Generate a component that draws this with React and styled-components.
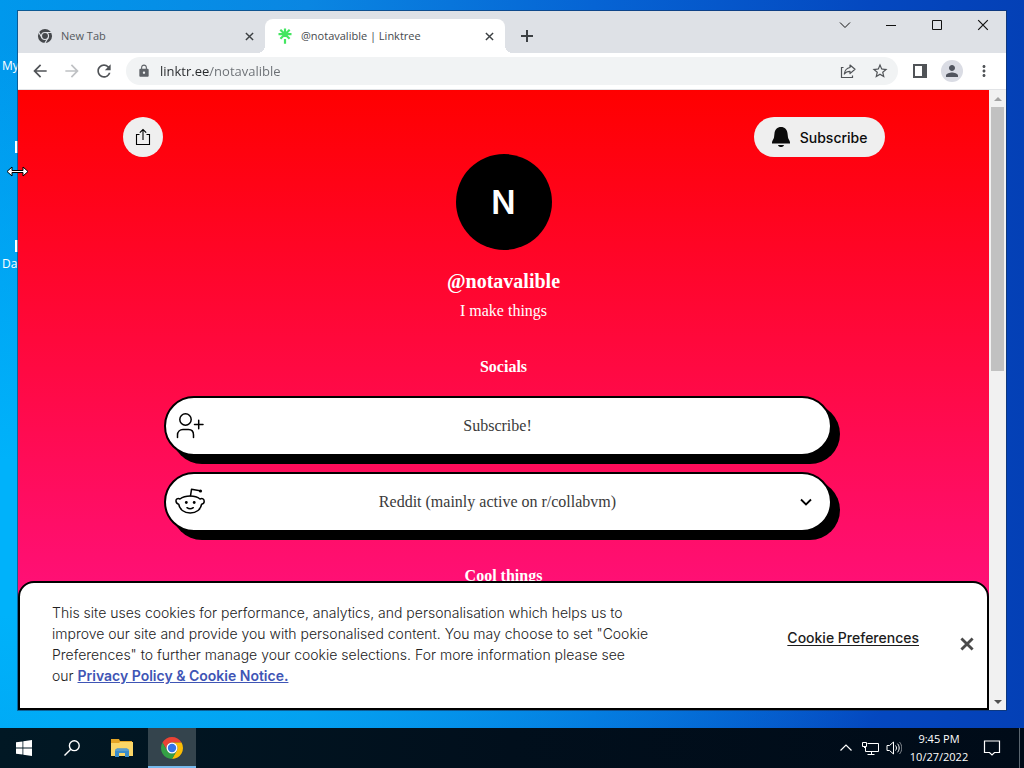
import React from "react";
import styled, { createGlobalStyle } from "styled-components";
import {
  MdArrowBack,
  MdArrowForward,
  MdRefresh,
  MdLock,
  MdStarBorder,
  MdMoreVert,
  MdPerson,
} from "react-icons/md";

const UI_FONT = '"Open Sans", "Noto Sans", sans-serif';
const PAGE_FONT = 'Inter, "Liberation Sans", sans-serif';
const SERIF_FONT = '"Liberation Serif", serif';

const GlobalStyle = createGlobalStyle`
  *, *::before, *::after { box-sizing: border-box; }
  body { margin: 0; font-family: ${UI_FONT}; }
  button {
    border: 0;
    padding: 0;
    margin: 0;
    background: none;
    color: inherit;
    font: inherit;
    cursor: pointer;
  }
  svg { display: block; flex: none; }
`;

/* ---------- Desktop ---------- */

const Desktop = styled.div`
  position: relative;
  display: flex;
  flex-direction: column;
  height: 100vh;
  overflow: hidden;
  background:
    radial-gradient(ellipse at 0% 70%, rgba(0, 178, 250, 1) 10%, rgba(0, 178, 250, 0) 65%),
    linear-gradient(90deg, #0098ec 0%, #0a86e2 30%, #0664d4 58%, #0448c0 85%, #0440b6 100%);
`;

const Shortcut = styled.span`
  position: absolute;
  left: 2px;
  top: ${(p) => p.$top}px;
  color: #fff;
  font-size: 12px;
  line-height: 16px;
`;

const ShortcutArt = styled.span`
  position: absolute;
  left: 15px;
  top: ${(p) => p.$top}px;
  width: 24px;
  height: 12px;
  background: #fff;
`;

const ResizeCursor = styled.svg`
  position: absolute;
  left: 6px;
  top: 165px;
`;

/* ---------- Browser window ---------- */

const Window = styled.main`
  position: relative;
  flex: 1;
  min-height: 0;
  margin: 11px 18px 18px;
  display: flex;
  flex-direction: column;
  background: #fff;
  box-shadow: 0 0 0 1px rgba(20, 50, 90, 0.6);
`;

const TitleBar = styled.header`
  display: flex;
  flex: none;
  height: 42px;
  padding-left: 7px;
  background: #dee1e6;
`;

const Tab = styled.div`
  position: relative;
  display: flex;
  align-items: center;
  align-self: flex-end;
  gap: 8px;
  width: 240px;
  height: 34px;
  padding: 0 8px 0 12px;
  border-radius: 8px 8px 0 0;
  background: ${(p) => (p.$active ? "#fff" : "transparent")};
  color: ${(p) => (p.$active ? "#45494d" : "#54585d")};
  font-size: 11px;
  line-height: 16px;

  &::before,
  &::after {
    content: ${(p) => (p.$active ? '""' : "none")};
    position: absolute;
    bottom: 0;
    width: 8px;
    height: 8px;
  }
  &::before {
    right: 100%;
    background: radial-gradient(circle at 0 0, transparent 8px, #fff 8px);
  }
  &::after {
    left: 100%;
    background: radial-gradient(circle at 100% 0, transparent 8px, #fff 8px);
  }
`;

const TabTitle = styled.span`
  flex: 1;
  white-space: nowrap;
`;

const TabButton = styled.button`
  display: grid;
  place-items: center;
  width: 16px;
  height: 16px;
  color: #3c4043;
`;

const NewTabButton = styled(TabButton)`
  align-self: flex-end;
  width: 28px;
  height: 34px;
  margin-left: 8px;
`;

const WindowControls = styled.div`
  display: flex;
  margin-left: auto;
`;

const WindowButton = styled.button`
  display: grid;
  place-items: center;
  width: 46px;
  height: 28px;
  color: #111;
`;

const Toolbar = styled.nav`
  display: flex;
  flex: none;
  align-items: center;
  height: 37px;
  padding: 0 6px;
  border-bottom: 1px solid #e2e4e7;
  background: #fff;
`;

const ToolButton = styled.button`
  display: grid;
  place-items: center;
  width: 32px;
  height: 28px;
  color: ${(p) => (p.$faded ? "#bfc1c4" : "#505357")};
`;

const AddressBar = styled.label`
  display: flex;
  flex: 1;
  align-items: center;
  height: 28px;
  margin: 0 6px;
  padding: 0 2px 0 11px;
  border-radius: 14px;
  background: #f1f3f4;
  color: #5f6368;
`;

const AddressInput = styled.input`
  flex: 1;
  min-width: 0;
  margin-left: 9px;
  padding: 0;
  border: 0;
  outline: 0;
  background: linear-gradient(90deg, #26282b 50px, #6a6e73 50px);
  background-clip: text;
  -webkit-text-fill-color: transparent;
  color: #5f6368;
  font-family: ${UI_FONT};
  font-size: 13px;
  line-height: 20px;
`;

const ProfileBadge = styled.span`
  display: grid;
  place-items: center;
  width: 22px;
  height: 22px;
  border-radius: 50%;
  background: #dadce4;
  color: #50545e;
`;

/* ---------- Page view ---------- */

const View = styled.div`
  display: flex;
  flex: 1;
  min-height: 0;
`;

const Page = styled.div`
  position: relative;
  flex: 1;
  overflow: hidden;
  background: linear-gradient(180deg, #ff0000 0%, #ff1493 100%);
  color: #fff;
  font-family: ${SERIF_FONT};
`;

const ScrollBar = styled.div`
  display: flex;
  flex-direction: column;
  align-items: center;
  width: 17px;
  background: #f1f1f1;
`;

const ScrollArrow = styled.button`
  display: grid;
  place-items: center;
  width: 17px;
  height: 17px;
  color: ${(p) => (p.$dim ? "#a3a3a3" : "#505050")};
`;

const ScrollTrack = styled.div`
  flex: 1;
  width: 13px;
`;

const ScrollThumb = styled.div`
  height: 45%;
  background: #c1c1c1;
`;

const ProfileHeader = styled.header`
  display: grid;
  grid-template-columns: 1fr auto 1fr;
  align-items: start;
  max-width: 762px;
  margin: 0 auto;
  padding-top: 27px;
`;

const ShareButton = styled.button`
  display: grid;
  place-items: center;
  width: 40px;
  height: 40px;
  border-radius: 50%;
  background: #efefef;
  color: #000;
`;

const SubscribeButton = styled.button`
  display: flex;
  align-items: center;
  justify-self: end;
  gap: 9px;
  height: 40px;
  padding: 0 17px;
  border-radius: 20px;
  background: #efefef;
  color: #0c0c0c;
  font-family: ${PAGE_FONT};
  font-size: 14px;
  font-weight: 500;
`;

const Avatar = styled.div`
  display: grid;
  place-items: center;
  width: 96px;
  height: 96px;
  margin-top: 37px;
  border-radius: 50%;
  background: #000;
  color: #fff;
  font-family: ${PAGE_FONT};
  font-size: 32px;
  font-weight: 600;
`;

const Handle = styled.h1`
  margin: 19px 0 0;
  font-size: 20px;
  line-height: 24px;
  text-align: center;
`;

const Bio = styled.p`
  margin: 8px 0 0;
  font-size: 16px;
  line-height: 20px;
  text-align: center;
`;

const SectionTitle = styled.h2`
  margin: 34px 0 20px;
  font-size: 16px;
  line-height: 20px;
  text-align: center;

  ${Bio} + & { margin: 36px 0 19px; }
`;

const Links = styled.div`
  display: flex;
  flex-direction: column;
  gap: 16px;
  max-width: 680px;
  margin: 0 auto;
  padding-right: 12px;
`;

const LinkCard = styled.a`
  display: grid;
  grid-template-columns: 32px 1fr 32px;
  align-items: center;
  justify-items: center;
  height: 60px;
  padding: 0 8px;
  border: 2px solid #000;
  border-radius: 30px;
  background: #fff;
  box-shadow: 8px 8px 0 #000;
  color: #3a3a3a;
  font-size: 16px;
  line-height: 20px;
  text-decoration: none;

  svg { color: #000; }
`;

/* ---------- Cookie banner ---------- */

const CookieBanner = styled.section`
  position: absolute;
  left: 0;
  right: 0;
  bottom: 0;
  display: flex;
  align-items: center;
  padding: 19px 12px 22px 32px;
  border: 2px solid #000;
  border-radius: 16px 16px 0 0;
  background: #fff;
  color: #222;
  font-family: ${PAGE_FONT};
  font-size: 14px;
`;

const CookieText = styled.p`
  max-width: 598px;
  margin: 0 auto 0 0;
  font-weight: 300;
  line-height: 21px;
`;

const PolicyLink = styled.a`
  color: #3f55b5;
  font-weight: 600;
`;

const PreferencesButton = styled.button`
  margin-right: 39px;
  padding-bottom: 14px;
  color: #1c1c1c;
  font-weight: 500;
  text-decoration: underline;
  text-underline-offset: 2px;
`;

const CloseButton = styled.button`
  display: grid;
  place-items: center;
  width: 17px;
  height: 20px;
  color: #4a4a4a;
`;

/* ---------- Taskbar ---------- */

const Taskbar = styled.footer`
  display: flex;
  flex: none;
  height: 40px;
  background: linear-gradient(90deg, #011824 0%, #010f1c 50%, #000b18 100%);
  color: #fff;
`;

const TaskGroup = styled.div`
  display: flex;
  gap: ${(p) => p.$gap || 0}px;
`;

const TaskButton = styled.button`
  display: grid;
  place-items: center;
  width: 48px;
  height: 40px;
  border-bottom: 2px solid ${(p) => (p.$active ? "#76b9ed" : "transparent")};
  border-top: 2px solid transparent;
  background: ${(p) => (p.$active ? "#34444d" : "none")};
`;

const Tray = styled.div`
  display: flex;
  align-items: center;
  margin-left: auto;
  padding-right: 7px;
`;

const TrayButton = styled.button`
  display: grid;
  place-items: center;
  width: ${(p) => p.$width || 24}px;
  height: 40px;
`;

const Clock = styled.time`
  width: 66px;
  font-size: 11px;
  line-height: 18px;
  text-align: center;
  white-space: nowrap;
`;

const ShowDesktop = styled.button`
  width: 5px;
  height: 40px;
  border-left: 1px solid #5b6670;
`;

/* ---------- Icons ---------- */

const Stroke = ({ size = 16, box = size, width = 1, children, ...rest }) => (
  <svg
    width={size}
    height={size}
    viewBox={`0 0 ${box} ${box}`}
    fill="none"
    stroke="currentColor"
    strokeWidth={width}
    aria-hidden="true"
    {...rest}
  >
    {children}
  </svg>
);

const ChromeLogo = ({ size }) => (
  <svg width={size} height={size} viewBox="2 2 44 44" aria-hidden="true">
    <path fill="#ea4335" d="M4.95 13A22 22 0 0 1 43.05 13H24A11 11 0 0 0 14.47 29.5Z" />
    <path fill="#fbbc05" d="M43.05 13A22 22 0 0 1 24 46L33.53 29.5A11 11 0 0 0 24 13Z" />
    <path fill="#34a045" d="M24 46A22 22 0 0 1 4.95 13L14.47 29.5A11 11 0 0 0 33.53 29.5Z" />
    <circle cx="24" cy="24" r="11" fill="#fff" />
    <circle cx="24" cy="24" r="8.4" fill="#3474e8" />
  </svg>
);

const GreyChrome = () => (
  <svg width="16" height="16" viewBox="-1 -1 50 50" aria-hidden="true">
    <circle cx="24" cy="24" r="22" fill="#45484c" />
    <g stroke="#dee1e6" strokeWidth="3.6" fill="none">
      <circle cx="24" cy="24" r="11" />
      <path d="M24 13H46M33.5 29.5L22.500 48.500M14.500 29.500L3.500 10.500" />
    </g>
  </svg>
);

const LinktreeMark = () => (
  <Stroke size={16} width={2.2} style={{ color: "#43e660" }}>
    <path d="M8 .5V9M1.500 6.200H14.500M3.300 1.700L12.600 10.700M12.700 1.700L3.400 10.700M8 11V15.700" />
  </Stroke>
);

const Cross = ({ size = 9, width = 1.6 }) => (
  <Stroke size={size} box={10} width={width}>
    <path d="M1 1L9 9M9 1L1 9" />
  </Stroke>
);

const PageShare = () => (
  <Stroke size={16} width={1.2}>
    <path d="M3.500 4.500H1.500V14.500H12.500V12.500" />
    <path
      d="M10 2L15 6.300L10 10.600V8.300C7.300 8.300 5.600 9.200 4.300 11C4.800 7.500 6.700 5 10 4.500Z"
      strokeLinejoin="round"
    />
  </Stroke>
);

const SidePanel = () => (
  <svg width="14" height="14" viewBox="0 0 14 14" aria-hidden="true">
    <path fill="currentColor" fillRule="evenodd" d="M0 0H14V14H0ZM2 2V12H9V2Z" />
  </svg>
);

const ShareTray = () => (
  <Stroke size={18} width={1.1}>
    <path d="M5.500 6.500H2.500V16.500H15.500V6.500H12.500M9 12V1.500M5.800 4.700L9 1.500L12.200 4.700" />
  </Stroke>
);

const Bell = () => (
  <svg width="20" height="22" viewBox="0 0 20 22" fill="currentColor" aria-hidden="true">
    <path d="M10 1C6.300 1 3.800 3.700 3.500 7.200L3 11.500C2.700 13.300 1 14.600 1 16.500V17.500H19V16.500C19 14.600 17.300 13.300 17 11.500L16.500 7.200C16.200 3.700 13.700 1 10 1Z" />
    <path d="M7 19H13C12.600 20.400 11.400 21 10 21C8.600 21 7.400 20.400 7 19Z" />
  </svg>
);

const PersonAdd = () => (
  <Stroke size={28} width={1.5} strokeLinecap="round">
    <circle cx="9.500" cy="7.500" r="5.700" />
    <path d="M1.500 25.500V23C1.500 19.500 4 17.500 7 17.500H12.500C15.500 17.500 17.500 19.500 17.500 23V25.500M18.500 12.500H27M22.700 8.300V16.700" />
  </Stroke>
);

const RedditFace = () => (
  <Stroke size={30} width={1.5} strokeLinejoin="round">
    <path d="M5 12C2.500 10.800 .8 12.300 1 14.200C1.200 16 2.300 17 3.700 17.200C4.300 22.200 9 26 15.200 26C21.500 26 26 22.200 26.600 17.200C28.100 16.900 29.200 15.900 29.200 14.200C29.200 11.900 27.300 10.800 25 12C22.600 10 19 9 15.200 9C11.300 9 7.600 10 5 12Z" />
    <path d="M15.500 8.800L16.500 2.300L25 3.800M12 20.700C13.800 22 16.500 22 18.300 20.700" strokeLinecap="round" />
    <circle cx="25.500" cy="4" r="1.600" fill="currentColor" stroke="none" />
    <circle cx="11.300" cy="15.500" r="1.400" fill="currentColor" stroke="none" />
    <circle cx="19.200" cy="15.500" r="1.400" fill="currentColor" stroke="none" />
  </Stroke>
);

const WindowsLogo = () => (
  <svg width="16" height="16" viewBox="0 0 16 16" fill="#fff" aria-hidden="true">
    <path d="M0 2.300L6.500 1.400V7.500H0ZM7.300 1.300L16 0V7.500H7.300ZM0 8.400H6.500V14.600L0 13.700ZM7.300 8.400H16V16L7.300 14.700Z" />
  </svg>
);

const FolderIcon = () => (
  <svg width="22" height="20" viewBox="0 0 22 20" aria-hidden="true">
    <path fill="#e5a526" d="M0 1H8L9 3H21V18H0Z" />
    <path fill="#fbd667" d="M0 5H8L9 4H22V18H0Z" />
    <path fill="#3a8ccb" d="M4 12L6 10.500H16L18 12V19H14V15H8V19H4Z" />
    <path fill="#5a9ccc" d="M6 10.500H16L18 12V13H4V12Z" />
  </svg>
);

/* ---------- App ---------- */

export default function App() {
  return (
    <Desktop>
      <GlobalStyle />
      <Shortcut $top={58}>My</Shortcut>
      <ShortcutArt $top={141} />
      <ShortcutArt $top={240} />
      <Shortcut $top={256}>Da</Shortcut>

      <Window>
        <TitleBar>
          <Tab>
            <GreyChrome />
            <TabTitle>New Tab</TabTitle>
            <TabButton aria-label="Close New Tab"><Cross /></TabButton>
          </Tab>
          <Tab $active>
            <LinktreeMark />
            <TabTitle>@notavalible | Linktree</TabTitle>
            <TabButton aria-label="Close Linktree"><Cross /></TabButton>
          </Tab>
          <NewTabButton aria-label="New tab">
            <Stroke size={12} width={2}><path d="M6 0V12M0 6H12" /></Stroke>
          </NewTabButton>
          <WindowControls>
            <WindowButton aria-label="Search tabs">
              <Stroke size={12}><path d="M1 3.500L6 8.500L11 3.500" /></Stroke>
            </WindowButton>
            <WindowButton aria-label="Minimize">
              <Stroke size={10}><path d="M0 5.500H10" /></Stroke>
            </WindowButton>
            <WindowButton aria-label="Maximize">
              <Stroke size={10}><path d="M.5 .5H9.500V9.500H.5Z" /></Stroke>
            </WindowButton>
            <WindowButton aria-label="Close window"><Cross size={12} width={1} /></WindowButton>
          </WindowControls>
        </TitleBar>

        <Toolbar>
          <ToolButton aria-label="Back"><MdArrowBack size={20} /></ToolButton>
          <ToolButton aria-label="Forward" $faded><MdArrowForward size={20} /></ToolButton>
          <ToolButton aria-label="Reload"><MdRefresh size={20} /></ToolButton>
          <AddressBar>
            <MdLock size={14} />
            <AddressInput aria-label="Address" type="text" defaultValue="linktr.ee/notavalible" />
            <ToolButton aria-label="Share this page"><PageShare /></ToolButton>
            <ToolButton aria-label="Bookmark this page"><MdStarBorder size={18} /></ToolButton>
          </AddressBar>
          <ToolButton aria-label="Side panel"><SidePanel /></ToolButton>
          <ToolButton aria-label="Profile">
            <ProfileBadge><MdPerson size={18} /></ProfileBadge>
          </ToolButton>
          <ToolButton aria-label="Menu"><MdMoreVert size={18} /></ToolButton>
        </Toolbar>

        <View>
          <Page>
            <ProfileHeader>
              <ShareButton aria-label="Share profile"><ShareTray /></ShareButton>
              <Avatar>N</Avatar>
              <SubscribeButton>
                <Bell />
                Subscribe
              </SubscribeButton>
            </ProfileHeader>
            <Handle>@notavalible</Handle>
            <Bio>I make things</Bio>
            <SectionTitle>Socials</SectionTitle>
            <Links>
              <LinkCard href="#subscribe">
                <PersonAdd />
                <span>Subscribe!</span>
              </LinkCard>
              <LinkCard href="#reddit">
                <RedditFace />
                <span>Reddit (mainly active on r/collabvm)</span>
                <Stroke size={12} width={1.8}><path d="M1 3.500L6 8.500L11 3.500" /></Stroke>
              </LinkCard>
            </Links>
            <SectionTitle>Cool things</SectionTitle>

            <CookieBanner aria-label="Cookie notice">
              <CookieText>
                This site uses cookies for performance, analytics, and personalisation which
                helps us to improve our site and provide you with personalised content. You may
                choose to set "Cookie Preferences" to further manage your cookie selections. For
                more information please see our{" "}
                <PolicyLink href="#privacy">Privacy Policy &amp; Cookie Notice.</PolicyLink>
              </CookieText>
              <PreferencesButton>Cookie Preferences</PreferencesButton>
              <CloseButton aria-label="Dismiss"><Cross size={14} width={2} /></CloseButton>
            </CookieBanner>
          </Page>
          <ScrollBar>
            <ScrollArrow aria-label="Scroll up" $dim>
              <svg width="8" height="4" viewBox="0 0 8 4"><path fill="currentColor" d="M0 4L4 0L8 4Z" /></svg>
            </ScrollArrow>
            <ScrollTrack><ScrollThumb /></ScrollTrack>
            <ScrollArrow aria-label="Scroll down">
              <svg width="8" height="4" viewBox="0 0 8 4"><path fill="currentColor" d="M0 0L4 4L8 0Z" /></svg>
            </ScrollArrow>
          </ScrollBar>
        </View>
      </Window>

      <Taskbar>
        <TaskGroup $gap={2}>
          <TaskGroup>
            <TaskButton aria-label="Start"><WindowsLogo /></TaskButton>
            <TaskButton aria-label="Search">
              <Stroke size={16} width={1.4}>
                <circle cx="10.300" cy="5.700" r="4.900" />
                <path d="M6.800 9.200L.5 15.500" />
              </Stroke>
            </TaskButton>
          </TaskGroup>
          <TaskButton aria-label="File Explorer"><FolderIcon /></TaskButton>
          <TaskButton aria-label="Google Chrome" $active>
            <ChromeLogo size={22} />
          </TaskButton>
        </TaskGroup>
        <Tray>
          <TrayButton aria-label="Hidden icons">
            <Stroke size={12} width={1.2}><path d="M.5 8.500L6 3L11.500 8.500" /></Stroke>
          </TrayButton>
          <TrayButton aria-label="Network">
            <Stroke size={17}>
              <path d="M5.500 3.500H16.500V11.500H3.500V7M.5 2.500H4.500V6.500H.5ZM2.500 6.500V8M9.500 11.500V14.500M5.500 14.500H12.500" />
            </Stroke>
          </TrayButton>
          <TrayButton aria-label="Volume">
            <Stroke size={16}>
              <path d="M1 5.500H3.500L7.500 2V14L3.500 10.500H1Z" />
              <path d="M9.500 5.500C10.800 7 10.800 9 9.500 10.500M11.500 3.700C13.700 6.200 13.700 9.800 11.500 12.300" />
              <path d="M13.500 2C16.500 5.500 16.500 10.500 13.500 14" opacity=".5" />
            </Stroke>
          </TrayButton>
          <Clock dateTime="2022-10-27T21:45">
            9:45 PM
            <br />
            10/27/2022
          </Clock>
          <TrayButton aria-label="Notifications" $width={40}>
            <Stroke size={18} width={1.2}>
              <path d="M1.500 2H16.500V13.500H11.500L9 16L6.500 13.500H1.500Z" />
            </Stroke>
          </TrayButton>
        </Tray>
        <ShowDesktop aria-label="Show desktop" />
      </Taskbar>

      <ResizeCursor width="23" height="13" viewBox="0 0 23 13" aria-hidden="true">
        <path
          d="M1 6.500L6 2V5.500H17V2L22 6.500L17 11V7.500H6V11Z"
          fill="#fff"
          stroke="#000"
          strokeWidth="1"
        />
      </ResizeCursor>
    </Desktop>
  );
}
